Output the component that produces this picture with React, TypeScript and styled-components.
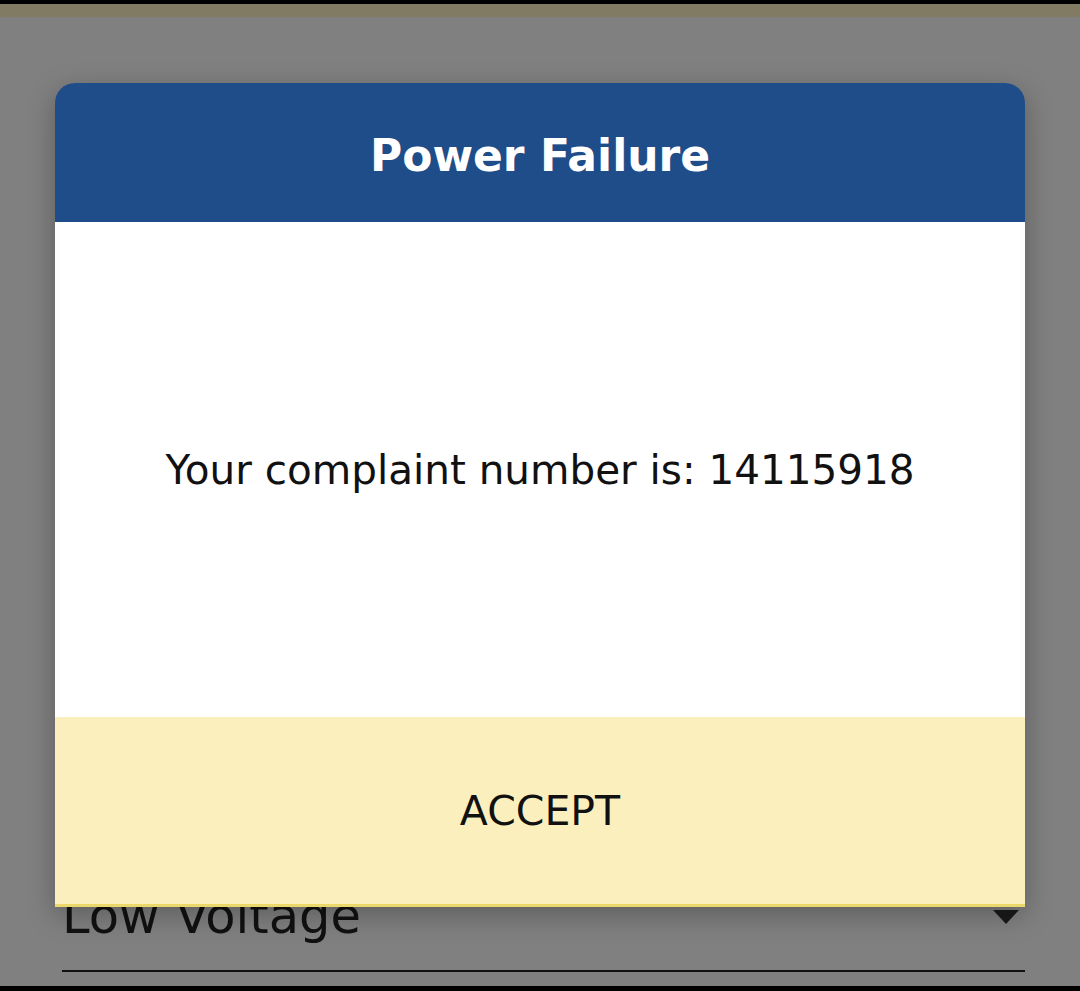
import { createGlobalStyle } from "styled-components"
import styled from "styled-components"

const GlobalStyle = createGlobalStyle`
  html, body {
    margin: 0;
    padding: 0;
    background: #808080;
    font-family: "DejaVu Sans", "Noto Sans", sans-serif;
  }
`

const App = () => {
  return (
    <Screen>
      <GlobalStyle />
      <StatusBar />
      <AppBar />
      <Form>
        <SelectField>
          <SelectValue>Low Voltage</SelectValue>
          <Caret />
        </SelectField>
      </Form>
      <BottomEdge />
      <Dialog role="dialog" aria-labelledby="dialog-title">
        <DialogHeader>
          <DialogTitle id="dialog-title">Power Failure</DialogTitle>
        </DialogHeader>
        <DialogBody>
          <Message>Your complaint number is: 14115918</Message>
        </DialogBody>
        <DialogFooter>
          <AcceptButton type="button">ACCEPT</AcceptButton>
        </DialogFooter>
      </Dialog>
    </Screen>
  )
}

const Screen = styled.div`
  position: relative;
  display: flex;
  flex-direction: column;
  width: 1080px;
  height: 991px;
  overflow: hidden;
  background: #808080;
`

const StatusBar = styled.div`
  height: 4px;
  background: #000;
`

const AppBar = styled.div`
  height: 13px;
  background: #817b63;
`

const Form = styled.div`
  flex: 1;
  display: flex;
  flex-direction: column;
  justify-content: flex-end;
  padding: 0 55px 14px 62px;
`

const SelectField = styled.div`
  display: flex;
  align-items: flex-end;
  justify-content: space-between;
  height: 90px;
  border-bottom: 2px solid #111;
`

const SelectValue = styled.span`
  font-size: 49.5px;
  line-height: 49px;
  color: #111;
  padding-bottom: 29px;
`

const Caret = styled.span`
  width: 0;
  height: 0;
  margin: 0 6px 46px 0;
  border-left: 13px solid transparent;
  border-right: 13px solid transparent;
  border-top: 14px solid #1a1a1a;
`

const BottomEdge = styled.div`
  height: 5px;
  background: #000;
`

const Dialog = styled.div`
  position: absolute;
  top: 83px;
  left: 55px;
  width: 970px;
  display: flex;
  flex-direction: column;
  border-radius: 20px 20px 0 0;
  overflow: hidden;
  box-shadow: 0 8px 28px rgba(0, 0, 0, 0.28);
`

const DialogHeader = styled.div`
  height: 139px;
  display: flex;
  align-items: center;
  justify-content: center;
  background: #1f4d89;
`

const DialogTitle = styled.h2`
  margin: 5px 0 0;
  color: #fff;
  font-size: 44px;
  font-weight: 700;
`

const DialogBody = styled.div`
  height: 495px;
  display: flex;
  align-items: center;
  justify-content: center;
  background: #fff;
`

const Message = styled.p`
  margin: 0;
  font-size: 40.5px;
  color: #111;
`

const DialogFooter = styled.div`
  height: 187px;
  display: flex;
  align-items: center;
  justify-content: center;
  background: #fbf0bd;
  border-bottom: 3px solid #ecd76a;
`

const AcceptButton = styled.button`
  border: none;
  background: transparent;
  font-family: inherit;
  font-size: 41px;
  color: #111;
  padding: 0;
  cursor: pointer;
`

export default App
